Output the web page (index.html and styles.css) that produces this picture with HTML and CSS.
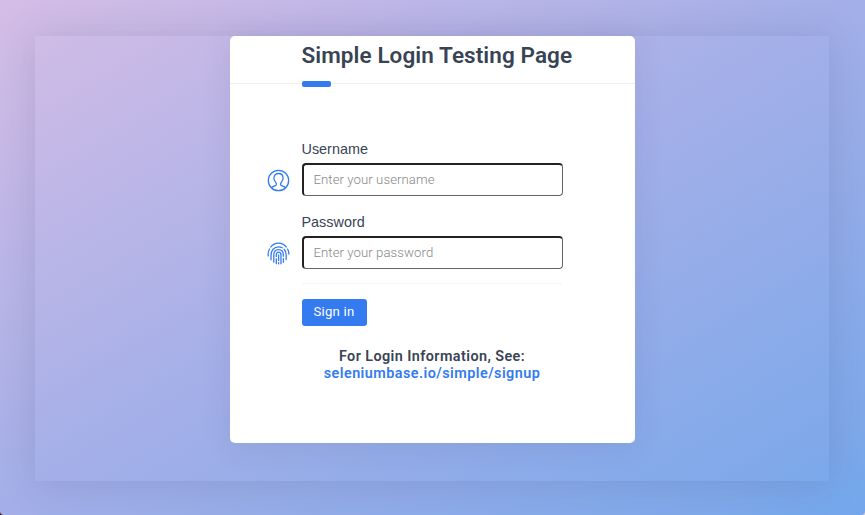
FILE: index.html
```html
<!DOCTYPE html>
<html lang="en">
<head>
<meta charset="utf-8">
<title>Simple Login Testing Page</title>
<link rel="stylesheet" href="styles.css">
</head>
<body>
<div class="page">
<main class="stage">
  <section class="card">
    <header class="card-header"><h1>Simple Login Testing Page</h1></header>
    <form class="form">
      <div class="field">
        <svg class="icon" viewBox="0 0 24 24"><circle cx="12" cy="12" r="10.6"/><path d="M4.600 19.500c1.300-1.400 3.600-1.600 4.800-2.500.8-.7.4-2-.3-3-1-1.200-1.900-2.300-1.900-4.300C7.200 6.400 9.300 4.700 12 4.700s4.800 1.700 4.800 5c0 2-.9 3.100-1.900 4.300-.7 1-1.100 2.300-.3 3 1.200.9 3.500 1.100 4.800 2.500"/></svg>
        <div class="control">
          <label for="username">Username</label>
          <input id="username" type="text" placeholder="Enter your username">
        </div>
      </div>
      <div class="field">
        <svg class="icon" viewBox="0 0 24 24"><path d="M4 5.200C8-.1 16-.1 20 5.200M1.300 14.500c-.4-2.700.1-5.200 1.300-7.200M21.400 7.300c1.100 1.600 1.500 3.300 1.400 5.200M4.200 18.500v-4.800C4.200 8.800 7.400 5 12 5c1.400 0 2.800.4 3.900 1M17.900 7.500c1.400 1.500 2.100 3.500 2.100 6v4.800M7.100 21v-7.500C7.100 10 9 7.900 12 7.900s5.100 2.200 5.100 5.600v1.300M17.100 17.400V21M9.700 17.600v5M9.700 15v-1.300c0-2 .8-3.100 2.400-3.100s2.500 1.100 2.500 3.100v9M12.100 13.500v5.800M12.100 21.600v1.200"/></svg>
        <div class="control">
          <label for="password">Password</label>
          <input id="password" type="password" placeholder="Enter your password">
        </div>
      </div>
      <div class="actions"><button type="button">Sign in</button></div>
      <div class="info"><span class="info-title">For Login Information, See:</span><a href="#">seleniumbase.io/simple/signup</a></div>
    </form>
  </section>
</main>
</div>
</body>
</html>
```
FILE: styles.css
```css
* { box-sizing: border-box; }
html { background: linear-gradient(90deg, #32152b 50%, #d8d1cc 50%); }
body { margin: 0; font-family: Roboto, sans-serif; color: #384454; }
.page {
  height: 515px;
  padding: 36px 36px 34px 35px;
  border-radius: 0 0 4px 4px;
  background: linear-gradient(to bottom right, #d5bde6, #a3afe8 50%, #80a9ea 90%, #72a7ed);
  overflow: hidden;
}
.stage {
  height: 445px;
  display: flex;
  justify-content: center;
  box-shadow: 0 2px 36px rgba(50, 50, 93, .15);
}
.card {
  width: 405px;
  height: 406.5px;
  background: #fff;
  border-radius: 5px;
  box-shadow: 0 4px 30px rgba(50, 50, 93, .1);
}
.card-header {
  height: 48px;
  padding-left: 72px;
  border-bottom: 1px solid #eff0f3;
}
h1 {
  margin: 0;
  height: 51px;
  font-size: 22.5px;
  line-height: 39px;
  font-weight: 600;
  letter-spacing: .08px;
  white-space: nowrap;
}
h1::after {
  content: "";
  display: block;
  width: 29px;
  height: 6px;
  margin-top: 6px;
  border-radius: 2px;
  background: #347af0;
}
.form { padding: 55px 72px 0 37px; }
.field { display: flex; height: 73px; gap: 12px; }
.icon {
  width: 23px;
  height: 23px;
  margin-top: 30px;
  flex: none;
  fill: none;
  stroke: #347af0;
  stroke-width: 1.35;
  stroke-linecap: round;
  stroke-linejoin: round;
}
.control { width: 261px; }
label {
  display: block;
  height: 24px;
  font: 14.4px/20px "Liberation Sans", sans-serif;
}
input {
  display: block;
  width: 261px;
  height: 33px;
  padding: 0 10px 2px;
  border: solid;
  border-color: #222 #646464 #646464 #222;
  border-width: 2px 1px 1px 2px;
  border-radius: 4px;
  outline: 0;
  font: 300 13.2px Roboto, sans-serif;
  letter-spacing: .06px;
}
input::placeholder { color: #888; opacity: 1; }
.actions {
  width: 260px;
  margin: -2px 0 0 35px;
  padding-top: 14.5px;
  border-top: 1px solid #f4f5f7;
}
button {
  display: block;
  width: 65px;
  height: 27px;
  padding: 0 0 1px;
  border: 0;
  border-radius: 3px;
  background: #347af0;
  color: #fff;
  font: 400 13.2px Roboto, sans-serif;
  letter-spacing: .2px;
}
.info {
  width: 261px;
  margin: 22px 0 0 35px;
  display: flex;
  flex-direction: column;
  align-items: center;
  font-size: 14.4px;
  line-height: 17px;
  font-weight: 600;
  white-space: nowrap;
}
.info-title { letter-spacing: .42px; }
.info a { color: #347af0; text-decoration: none; letter-spacing: .45px; }
```
